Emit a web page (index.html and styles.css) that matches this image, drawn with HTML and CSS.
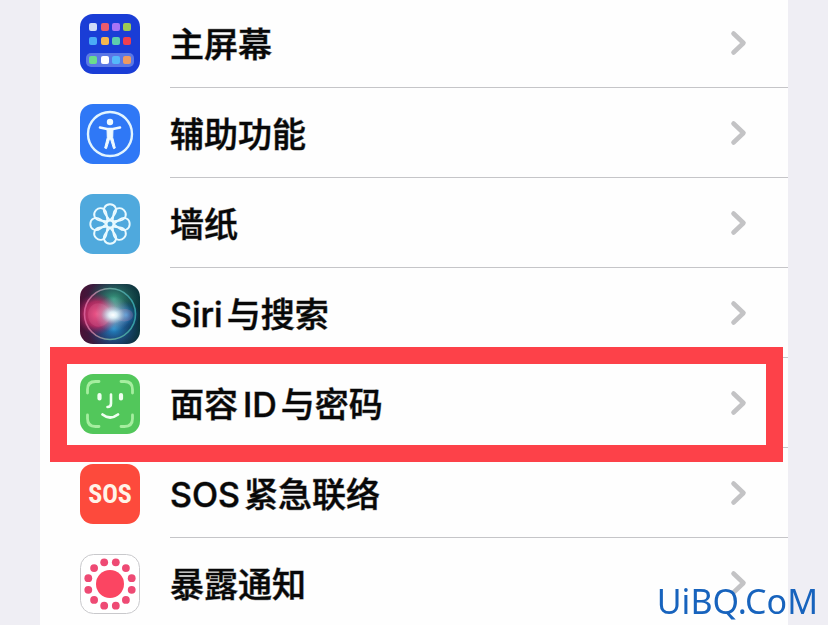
FILE: index.html
```html
<!DOCTYPE html>
<html lang="zh-CN">
<head>
<meta charset="utf-8">
<meta name="viewport" content="width=device-width, initial-scale=1">
<title>设置</title>
<link rel="stylesheet" href="styles.css">
</head>
<body>
<svg class="defs" aria-hidden="true">
  <symbol id="chevron" viewBox="0 0 18 28"><path d="M3.500 4.500 13.500 14 3.500 23.500" fill="none" stroke="#c3c3c5" stroke-width="4.600" stroke-linecap="round" stroke-linejoin="round"/></symbol>
</svg>
<main class="settings">
  <a class="row" href="#home">
    <svg class="icon" viewBox="0 0 60 60" aria-hidden="true">
      <rect width="60" height="60" rx="13" fill="#1a3dd6"/>
      <rect x="6" y="39" width="48" height="14" rx="5" fill="#5b78e6"/>
      <g>
        <rect x="9" y="9" width="8" height="8" rx="2" fill="#cfdcf8"/><rect x="21" y="9" width="8" height="8" rx="2" fill="#ea5c6c"/><rect x="32" y="9" width="8" height="8" rx="2" fill="#a974f6"/><rect x="43" y="9" width="8" height="8" rx="2" fill="#9ccb52"/>
        <rect x="9" y="23" width="8" height="8" rx="2" fill="#4aaaf6"/><rect x="21" y="23" width="8" height="8" rx="2" fill="#f5b64f"/><rect x="32" y="23" width="8" height="8" rx="2" fill="#5dcdae"/><rect x="43" y="23" width="8" height="8" rx="2" fill="#ee3f50"/>
        <rect x="9" y="42" width="8" height="8" rx="2" fill="#6bdc8c"/><rect x="21" y="42" width="8" height="8" rx="2" fill="#fff"/><rect x="32" y="42" width="8" height="8" rx="2" fill="#55b9fa"/><rect x="43" y="42" width="8" height="8" rx="2" fill="#ee9a60"/>
      </g>
    </svg>
    <span class="body"><span class="label">主屏幕</span><svg class="chevron" aria-hidden="true"><use href="#chevron"/></svg></span>
  </a>
  <a class="row" href="#accessibility">
    <svg class="icon" viewBox="0 0 60 60" aria-hidden="true">
      <rect width="60" height="60" rx="13" fill="#2f78f6"/>
      <circle cx="30" cy="30" r="22" fill="none" stroke="#e2f5ff" stroke-width="2.400"/>
      <circle cx="30" cy="18" r="3.200" fill="#effaff"/>
      <path d="M20 23.500 27 25h6l7-1.500" fill="none" stroke="#effaff" stroke-width="2.600" stroke-linecap="round"/>
      <path d="M27 24.500h6l-.3 9 2.600 10.500-1.800.6L30.500 35h-1l-3 9.600-1.800-.6 2.600-10.500z" fill="#effaff" stroke="#effaff" stroke-linejoin="round"/>
    </svg>
    <span class="body"><span class="label">辅助功能</span><svg class="chevron" aria-hidden="true"><use href="#chevron"/></svg></span>
  </a>
  <a class="row" href="#wallpaper">
    <svg class="icon" viewBox="0 0 60 60" aria-hidden="true">
      <defs><path id="petal" d="M30 26.500 25.500 20.500C21.800 15.500 25 10.300 30 10.300S38.200 15.500 34.500 20.500Z"/></defs>
      <rect width="60" height="60" rx="13" fill="#4fa9dd"/>
      <g fill="none" stroke="#e9faff" stroke-width="1.900" stroke-linejoin="round">
        <use href="#petal"/><use href="#petal" transform="rotate(45 30 30)"/><use href="#petal" transform="rotate(90 30 30)"/><use href="#petal" transform="rotate(135 30 30)"/><use href="#petal" transform="rotate(180 30 30)"/><use href="#petal" transform="rotate(225 30 30)"/><use href="#petal" transform="rotate(270 30 30)"/><use href="#petal" transform="rotate(315 30 30)"/>
        <circle cx="30" cy="30" r="3.500"/>
      </g>
    </svg>
    <span class="body"><span class="label">墙纸</span><svg class="chevron" aria-hidden="true"><use href="#chevron"/></svg></span>
  </a>
  <a class="row" href="#siri">
    <svg class="icon" viewBox="0 0 60 60" aria-hidden="true">
      <defs>
        <clipPath id="tile"><rect width="60" height="60" rx="13"/></clipPath>
        <linearGradient id="night"><stop offset="0" stop-color="#4b1135"/><stop offset=".5" stop-color="#25284a"/><stop offset="1" stop-color="#09343b"/></linearGradient>
        <radialGradient id="rose"><stop offset="0" stop-color="#f04c80"/><stop offset=".6" stop-color="#c52b66" stop-opacity=".8"/><stop offset="1" stop-color="#8b1c5a" stop-opacity="0"/></radialGradient>
        <radialGradient id="green"><stop offset="0" stop-color="#3a9b80"/><stop offset="1" stop-color="#167355" stop-opacity="0"/></radialGradient>
        <radialGradient id="blue"><stop offset="0" stop-color="#249be0"/><stop offset="1" stop-color="#154998" stop-opacity="0"/></radialGradient>
        <radialGradient id="glow"><stop offset="0" stop-color="#fff"/><stop offset=".35" stop-color="#e3f9ff" stop-opacity=".85"/><stop offset="1" stop-color="#9cbdd5" stop-opacity="0"/></radialGradient>
        <linearGradient id="ring"><stop offset="0" stop-color="#d65a94"/><stop offset=".5" stop-color="#67a69b"/><stop offset="1" stop-color="#319ca5"/></linearGradient>
      </defs>
      <g clip-path="url(#tile)">
        <rect width="60" height="60" fill="url(#night)"/>
        <ellipse cx="34" cy="15" rx="27" ry="22" fill="url(#green)"/>
        <ellipse cx="34" cy="45" rx="27" ry="23" fill="url(#blue)" opacity=".85"/>
        <circle cx="17" cy="30" r="21" fill="url(#rose)"/>
        <circle cx="46" cy="31" r="14" fill="url(#blue)"/>
        <circle cx="30" cy="30" r="25.500" fill="none" stroke="url(#ring)" stroke-width="1.600"/>
        <path d="M32 31C25 13 8 18 8 31S25 49 32 31C40 22 53 24 53 31S40 41 32 31Z" fill="#ef76a6" fill-opacity=".22"/>
        <circle cx="33" cy="30" r="18" fill="url(#glow)" opacity=".6"/>
        <ellipse cx="33" cy="31" rx="12" ry="9" fill="url(#glow)"/>
      </g>
    </svg>
    <span class="body"><span class="label"><span class="latin">Siri</span>与搜索</span><svg class="chevron" aria-hidden="true"><use href="#chevron"/></svg></span>
  </a>
  <a class="row highlighted" href="#faceid">
    <svg class="icon" viewBox="0 0 60 60" aria-hidden="true">
      <rect width="60" height="60" rx="13" fill="#52c75b"/>
      <path d="M7.500 19v-3.500q0-8 8-8H19M41 7.500h3.500q8 0 8 8V19M52.500 41v3.500q0 8-8 8H41M19 52.500h-3.500q-8 0-8-8V41" fill="none" stroke="#a5ee9f" stroke-width="2.800" stroke-linecap="round"/>
      <g fill="none" stroke="#effff0" stroke-linecap="round">
        <path d="M19.500 21v3.500M41 21v3.500" stroke-width="4.200"/>
        <path d="M31 20.500v9q0 3.500-3.500 3.500" stroke-width="2.600"/>
        <path d="M22.500 40.500q7.500 6 15.500 0" stroke-width="2.800"/>
      </g>
    </svg>
    <span class="body"><span class="label">面容<span class="latin inner">ID</span>与密码</span><svg class="chevron" aria-hidden="true"><use href="#chevron"/></svg></span>
  </a>
  <a class="row" href="#sos">
    <span class="icon sos" aria-hidden="true">SOS</span>
    <span class="body"><span class="label"><span class="latin">SOS</span>紧急联络</span><svg class="chevron" aria-hidden="true"><use href="#chevron"/></svg></span>
  </a>
  <a class="row" href="#exposure">
    <svg class="icon" viewBox="0 0 60 60" aria-hidden="true">
      <rect x=".5" y=".5" width="59" height="59" rx="13" fill="#fff" stroke="#c9c9cc"/>
      <circle cx="30" cy="30" r="14" fill="#fb4562"/>
      <g fill="#ee4a74">
        <circle cx="24.200" cy="8.300" r="3.900"/><circle cx="35.800" cy="8.300" r="3.900"/><circle cx="45.900" cy="14.100" r="3.900"/><circle cx="51.700" cy="24.200" r="3.900"/><circle cx="51.700" cy="35.800" r="3.900"/><circle cx="45.900" cy="45.900" r="3.900"/><circle cx="35.800" cy="51.700" r="3.900"/><circle cx="24.200" cy="51.700" r="3.900"/><circle cx="14.100" cy="45.900" r="3.900"/><circle cx="8.300" cy="35.800" r="3.900"/><circle cx="8.300" cy="24.200" r="3.900"/><circle cx="14.100" cy="14.100" r="3.900"/>
      </g>
    </svg>
    <span class="body"><span class="label">暴露通知</span><svg class="chevron" aria-hidden="true"><use href="#chevron"/></svg></span>
  </a>
</main>
<div class="watermark">UiBQ.CoM</div>
</body>
</html>
```
FILE: styles.css
```css
* {
  box-sizing: border-box;
}

body {
  margin: 0;
  height: 100vh;
  overflow: hidden;
  background: #efeef4;
  color: #080808;
  font-family: Inter, "Noto Sans CJK SC", sans-serif;
}

.defs {
  position: absolute;
  width: 0;
  height: 0;
}

.settings {
  margin: -2px 40px 0;
  background: #fefefe;
}

.row {
  position: relative;
  display: flex;
  gap: 30px;
  height: 90px;
  padding-left: 40px;
  color: inherit;
  text-decoration: none;
}

.icon {
  flex: none;
  width: 60px;
  height: 60px;
  margin-top: 16px;
}

.body {
  flex: 1;
  display: flex;
  align-items: center;
  justify-content: space-between;
  padding-right: 40px;
  border-bottom: 1px solid #c5c5c8;
}

.label {
  padding-top: 4px;
  font-size: 34px;
  font-weight: 500;
  line-height: 48px;
  white-space: nowrap;
  -webkit-text-stroke: 1px rgb(8 8 8 / 50%);
}

.latin {
  margin-right: 4px;
}

.inner {
  margin-left: 5px;
}

.chevron {
  width: 18px;
  height: 28px;
}

.sos {
  display: flex;
  align-items: center;
  justify-content: center;
  border-radius: 13px;
  background: #fd4a3c;
  color: #fff3e8;
  font: bold 26px/30px "Liberation Sans Narrow", "Roboto Condensed", Roboto, sans-serif;
}

.highlighted::after {
  content: "";
  position: absolute;
  inset: -11px 5px -14px 10px;
  z-index: 1;
  border: 17px solid #fd4149;
  pointer-events: none;
}

.watermark {
  position: fixed;
  right: 10px;
  bottom: 4px;
  color: #1763bd;
  font: 34px/40px "Noto Sans", sans-serif;
}
```
